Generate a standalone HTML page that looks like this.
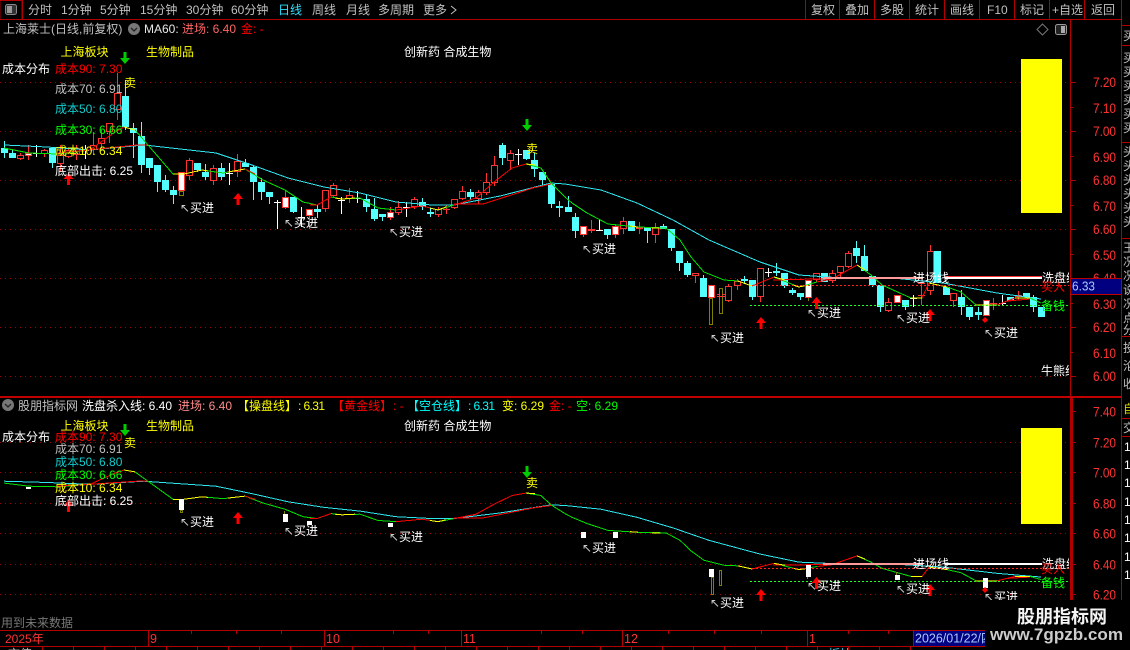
<!DOCTYPE html>
<html><head><meta charset="utf-8"><style>
html,body{margin:0;padding:0;background:#000;width:1130px;height:650px;overflow:hidden}
svg{display:block}
text{font-family:"Liberation Sans","WenQuanYi Zen Hei","Noto Sans CJK SC",sans-serif;font-size:12px;white-space:pre}
.g{fill:#c0c0c0}.w{fill:#fff}.y{fill:#ff0}.r{fill:#f00}.p{fill:#ff6464}.c{fill:#0ff}.gn{fill:#0f0}.dc{fill:#1cc}
.ax{fill:#ff3232;font-size:13.5px}
.ar{font-family:"DejaVu Sans",sans-serif;font-size:12px;fill:#ccc}
.crisp path,.crisp line,.crisp rect{shape-rendering:crispEdges}
</style></head><body>
<svg width="1130" height="650" viewBox="0 0 1130 650" xmlns="http://www.w3.org/2000/svg">
<defs>
<path id="up" d="M-5 6L0 0L5 6H1.5V12H-1.5V6Z" fill="#f00"/>
<path id="dn" d="M-5 6L0 12L5 6H1.5V0H-1.5V6Z" fill="#0c0"/>
<clipPath id="ch"><rect x="0" y="20" width="1069" height="376"/></clipPath>
<clipPath id="cb"><rect x="0" y="398" width="1069" height="232"/></clipPath>
<clipPath id="cr"><rect x="1122" y="20" width="8" height="630"/></clipPath>
</defs>

<!-- chrome lines -->
<g class="crisp" stroke="#b00000" fill="none">
<path d="M0 19.5H1121"/>
<path d="M22.5 0V19M805.5 0V19M839.5 0V19M874.5 0V19M909.5 0V19M944.5 0V19M979.5 0V19M1014.5 0V19M1049.5 0V19M1084.5 0V19M1121.5 0V650"/>
<path d="M1070.5 20V396M1121 25.5H1130M1121 45.5H1130M1121 142.5H1130M1121 238.5H1130M1121 336.5H1130M1121 418.5H1130M1121 436.5H1130"/>
<path d="M0 630.5H1070M0 646.5H1130"/>
<path d="M1070 82.5H1076M1070 107.5H1073M1070 131.5H1076M1070 156.5H1073M1070 180.5H1076M1070 205.5H1073M1070 229.5H1076M1070 254.5H1073M1070 278.5H1076M1070 303.5H1073M1070 327.5H1076M1070 352.5H1073M1070 376.5H1076"/>
<path d="M1071 411.5H1076M1071 426.5H1073M1071 442.5H1076M1071 457.5H1073M1071 472.5H1076M1071 488.5H1073M1071 503.5H1076M1071 518.5H1073M1071 533.5H1076M1071 549.5H1073M1071 564.5H1076M1071 579.5H1073M1071 594.5H1076M1071 610.5H1073"/>
<path d="M148.5 631V646M324.5 631V646M461.5 631V646M622.5 631V646M807.5 631V646M191.5 631V634M236.5 631V634M281.5 631V634M393.5 631V634M428.5 631V634M541.5 631V634M582.5 631V634M668.5 631V634M714.5 631V634M761.5 631V634M848.5 631V634M888.5 631V634M42.5 646V650M73.5 646V650M104.5 646V650M135.5 646V650M166.5 646V650M197.5 646V650M228.5 646V650M259.5 646V650M290.5 646V650M321.5 646V650M352.5 646V650M383.5 646V650M414.5 646V650M445.5 646V650M476.5 646V650M507.5 646V650M538.5 646V650M569.5 646V650M600.5 646V650M631.5 646V650M662.5 646V650M693.5 646V650M724.5 646V650M755.5 646V650M786.5 646V650M817.5 646V650M848.5 646V650M879.5 646V650M910.5 646V650"/>
</g>
<rect x="0" y="396" width="1121" height="2" fill="#c00000" class="crisp" shape-rendering="crispEdges"/>
<rect x="1070" y="398" width="3" height="232" fill="#b00000" shape-rendering="crispEdges"/>
<rect x="0" y="0.5" width="22" height="19" fill="none" stroke="#b00000"/>

<!-- grid dots -->
<g stroke="#a00000" stroke-dasharray="1 4" fill="none" shape-rendering="crispEdges">
<path d="M0 82.5H1069M0 131.5H1069M0 180.5H1069M0 229.5H1069M0 278.5H1069M0 327.5H1069M0 376.5H1069"/>
<path d="M0 442.5H1069M0 472.5H1069M0 503.5H1069M0 533.5H1069M0 564.5H1069M0 594.5H1069"/>
</g>

<!-- yellow blocks -->
<rect x="1021" y="59" width="41" height="154" fill="#ff0"/>
<rect x="1021" y="428" width="41" height="96" fill="#ff0"/>

<!-- TOP CANDLES -->
<g clip-path="url(#ch)" shape-rendering="crispEdges">
<path fill="none" stroke="#54ffff" d="M4.5 141V158M12.5 150V158M52.5 148V168M125.5 80V130M133.5 123V158M141.5 122V173M149.5 158V175M157.5 165V192M165.5 175V192M173.5 186V204M197.5 163V172M205.5 164V180M221.5 163V180M245.5 159V167M253.5 165V200M261.5 178V200M269.5 192V204M293.5 197V213M317.5 205V218M366.5 195V212M374.5 198V221M382.5 214V221M422.5 198V210M430.5 208V217M470.5 189V200M502.5 143V165M526.5 150V160M534.5 153V177M542.5 172V186M551.5 184V208M559.5 201V217M568.5 196V212M575.5 213V238M607.5 229V239M631.5 221V231M647.5 227V243M663.5 224V229M671.5 229V251M679.5 251V271M687.5 261V277M703.5 275V297M744.5 276V284M752.5 280V300M776.5 263V276M784.5 273V288M792.5 288V295M800.5 293V300M824.5 273V282M856.5 241V263M864.5 245V271M872.5 276V287M880.5 285V312M905.5 300V310M937.5 251V283M946.5 287V295M961.5 290V315M969.5 307V320M978.5 307V320M1010.5 297V301M1026.5 293V297M1033.5 295V312M1041.5 307V317"/>
<path fill="none" stroke="#54ffff" stroke-width="7" d="M4.5 148V153M12.5 153V158M52.5 148V163M125.5 96V127M133.5 128V133M141.5 136V165M149.5 158V168M157.5 165V182M165.5 180V190M173.5 190V195M197.5 163V170M205.5 172V177M221.5 168V177M245.5 163V167M253.5 167V182M261.5 182V192M269.5 192V197M293.5 197V212M317.5 209V212M366.5 199V207M374.5 209V219M382.5 214V217M422.5 202V207M430.5 212V214M470.5 192V197M502.5 145V158M526.5 150V159M534.5 160V169M542.5 172V180M551.5 184V204M559.5 206V208M568.5 207V212M575.5 217V231M607.5 229V235M631.5 221V231M647.5 227V231M663.5 226V229M671.5 229V248M679.5 251V263M687.5 263V275M703.5 278V297M744.5 279V281M752.5 280V297M776.5 271V273M784.5 273V286M792.5 290V293M800.5 293V297M824.5 273V282M856.5 248V256M864.5 256V271M872.5 276V285M880.5 285V307M905.5 300V307M937.5 251V283M946.5 287V295M961.5 297V307M969.5 307V317M978.5 312V315M1010.5 297V301M1026.5 293V297M1033.5 297V307M1041.5 307V317"/>
<path fill="none" stroke="#ff3232" d="M20.5 153V160M44.5 149V157M60.5 145V172M68.5 148V158M76.5 145V160M93.5 132V155M101.5 130V150M109.5 123V143M117.5 73V120M189.5 158V180M213.5 165V185M237.5 154V177M325.5 190V212M333.5 183V198M349.5 188V203M398.5 201V215M414.5 197V209M438.5 207V217M454.5 199V209M462.5 186V200M478.5 190V204M486.5 173V195M494.5 156V186M510.5 150V170M591.5 220V233M623.5 217V234M639.5 222V234M655.5 223V243M695.5 273V283M728.5 284V302M737.5 279V290M760.5 268V302M816.5 273V282M832.5 270V283M840.5 266V278M848.5 251V268M888.5 298V312M921.5 283V305M930.5 245V295M953.5 293V307M993.5 298V310M1018.5 291V300M446.5 205V214M28.5 145V160M309.5 209V229M390.5 207V220M583.5 226V237M615.5 224V238"/>
<path fill="#000" stroke="#ff3232" d="M17.5 155.5h6v3h-6zM41.5 150.5h6v3h-6zM57.5 155.5h6v8h-6zM65.5 150.5h6v6h-6zM73.5 148.5h6v6h-6zM90.5 145.5h6v4h-6zM98.5 138.5h6v5h-6zM106.5 123.5h6v8h-6zM114.5 93.5h6v16h-6zM186.5 160.5h6v15h-6zM210.5 168.5h6v12h-6zM234.5 161.5h6v10h-6zM322.5 190.5h6v18h-6zM330.5 185.5h6v10h-6zM346.5 195.5h6v3h-6zM395.5 207.5h6v5h-6zM411.5 199.5h6v7h-6zM435.5 209.5h6v5h-6zM451.5 199.5h6v8h-6zM459.5 191.5h6v7h-6zM475.5 192.5h6v6h-6zM483.5 182.5h6v10h-6zM491.5 165.5h6v17h-6zM507.5 153.5h6v7h-6zM588.5 229.5h6v1h-6zM620.5 221.5h6v7h-6zM636.5 227.5h6v1h-6zM652.5 227.5h6v7h-6zM692.5 273.5h6v2h-6zM725.5 286.5h6v14h-6zM734.5 281.5h6v4h-6zM757.5 268.5h6v28h-6zM813.5 273.5h6v6h-6zM829.5 273.5h6v7h-6zM837.5 266.5h6v6h-6zM845.5 253.5h6v13h-6zM885.5 302.5h6v8h-6zM927.5 251.5h6v39h-6zM950.5 293.5h6v7h-6zM1015.5 295.5h6v1h-6z"/>
<path fill="none" stroke="#ff3232" d="M918 283.5h7M918 295.5h7M990 303.5h7M443 209.5h7"/>
<path fill="#fff" stroke="#ff3232" d="M25.5 153.5h6v2h-6zM178.5 172.5h6v18h-6zM282.5 197.5h6v10h-6zM306.5 209.5h6v6h-6zM387.5 212.5h6v5h-6zM580.5 226.5h6v8h-6zM612.5 226.5h6v8h-6zM708.5 285.5h6v12h-6zM805.5 280.5h6v17h-6zM894.5 295.5h6v7h-6zM983.5 300.5h6v15h-6z"/>
<path fill="none" stroke="#808000" d="M179.5 191.5h4v4h-4zM285.5 190V197M285.5 208V209M709.5 298.5h3v26h-3zM719.5 288.5h3v25h-3zM808.5 298V301"/>
<path fill="none" stroke="#ff3232" d="M717 294.5h3M722 294.5h3M717 296.5h8"/>
<path fill="none" stroke="#fff" d="M36.5 145V157M33 153.5H40M85.5 145V159M82 150.5H89M229.5 163V185M226 173.5H233M277.5 200V229M274 202.5H281M301.5 207V227M298 217.5H305M341.5 197V214M338 200.5H345M357.5 191V203M354 198.5H361M406.5 202V217M403 207.5H410M518.5 149V165M515 154.5H522M599.5 220V231M596 230.5H603M768.5 268V277M765 272.5H772M913.5 295V307M910 298.5H917M1002.5 295V305M999 303.5H1006"/>
</g>

<!-- LINES (top) -->
<g clip-path="url(#ch)">
<g id="L" fill="none" shape-rendering="crispEdges">
<path vector-effect="non-scaling-stroke" stroke="#2ee8f0" stroke-width="1" d="M4 145L47 147L90 150L144 145L216 153L252 165L288 178L324 187L360 193L396 202L432 205L454 205L500 196L551 183L565 184L601 190L637 203L673 220L709 240L760 262L799 275L842 278L893 278L943 283L997 293L1041 299"/>
<path vector-effect="non-scaling-stroke" stroke="#00e000" stroke-width="1" d="M4 148L29 153L58 154L90 150L101 142L115 132L124 127L135 130L148 145L173 174L184 174L202 170L223 173L245 169L263 180L285 190L303 202L317 205L331 197L342 199L360 198L378 208L396 210L422 206L438 210L454 205L476 198L494 182L512 168L526 164L541 168L551 183L565 197L572 203L587 213L608 224L637 227L666 228L680 240L691 257L704 272L724 280L738 281L752 286L774 277L799 287L817 282L832 279L857 265L871 275L882 285L911 298L922 298L929 283L947 287L961 292L976 305L997 305L1015 298L1030 298L1041 303"/>
<path vector-effect="non-scaling-stroke" stroke="#f00" stroke-width="1" d="M58 153L108 148L137 145L148 145M90 150L101 142L115 132L124 127M454 205L476 198L494 182L512 168L526 164M454 204L483 204L505 197L533 188L551 184M245 169L255 174M310 205L317 205L331 197M396 210L422 206L430 208M752 286L774 277M817 282L832 279L857 265M773 280L815 279L875 278M922 298L929 283M997 305L1015 298M1008 301L1030 299"/>
<path vector-effect="non-scaling-stroke" stroke="#ff0" stroke-width="1" d="M124 127L135 130M173 174L184 174L202 170L208 171M228 172L245 169M335 198L342 199L355 198M430 208L438 210L446 207M526 164L535 165M630 226L638 227M652 228L660 228M738 281L752 286M774 277L785 280M793 285L799 287L808 285M857 265L865 270M911 298L922 298M929 283L947 287M976 305L997 305M1015 298L1030 298"/>
</g>
<path stroke="#ff9a9a" stroke-width="2" d="M823 278H923"/>
<path stroke="#fff" stroke-width="2" d="M945 278H1042"/>
<path stroke="#f33" stroke-width="1" d="M945 276.5H1042"/>
<path stroke="#ff2020" stroke-dasharray="2 2" d="M752 285.5H1070" shape-rendering="crispEdges"/>
<path stroke="#2f2" stroke-dasharray="2 2" d="M750 305.5H1070" shape-rendering="crispEdges"/>
</g>

<!-- BOTTOM LINES AND MARKS -->
<g clip-path="url(#cb)">
<use href="#L" transform="translate(0,390.97) scale(1,.6224)"/>
<path stroke="#ff9a9a" stroke-width="2" d="M823 564H923"/>
<path stroke="#fff" stroke-width="2" d="M945 564H1042"/>
<path stroke="#ff2020" stroke-dasharray="2 2" d="M752 568.5H1070" shape-rendering="crispEdges"/>
<path stroke="#2f2" stroke-dasharray="2 2" d="M750 581.5H1070" shape-rendering="crispEdges"/>
<g shape-rendering="crispEdges">
<path fill="#fff" d="M179 499h5v11h-5zM283 514h5v8h-5zM307 521h5v4h-5zM388 523h5v4h-5zM26 487h5v2h-5zM581 532h5v6h-5zM613 532h5v6h-5zM709 569h5v8h-5zM806 565h5v12h-5zM895 575h5v5h-5zM983 578h5v10h-5z"/>
<path fill="none" stroke="#808000" d="M180.5 510.5h2v2h-2zM284.5 511v3M711.5 577.5h2v17h-2zM719.5 570.5h2v15h-2zM807.5 577v2M896.5 572v3"/>
</g>
</g>

<!-- arrows -->
<use href="#dn" x="125" y="52"/><use href="#up" x="68.5" y="173"/><use href="#up" x="238" y="193"/><use href="#dn" x="527" y="119"/>
<use href="#up" x="761" y="317"/><use href="#up" x="816.5" y="297"/><use href="#up" x="930" y="309"/>
<path d="M985 317L988 320L985 323L982 320Z" fill="#f00"/>
<use href="#dn" x="125" y="424"/><use href="#up" x="68.5" y="500"/><use href="#up" x="238" y="512"/><use href="#dn" x="527" y="466"/>
<use href="#up" x="761" y="589"/><use href="#up" x="816.5" y="577"/><use href="#up" x="930" y="584"/>
<path d="M985 587L988 590L985 593L982 590Z" fill="#f00"/>

<!-- toolbar -->
<g>
<rect x="5.5" y="4.5" width="11" height="10" rx="2" fill="#333" stroke="#888"/>
<rect x="7" y="6" width="5" height="7" fill="#999"/>
<text class="g" x="28" y="14">分时</text><text class="g" x="61" y="14">1分钟</text><text class="g" x="100" y="14">5分钟</text><text class="g" x="140" y="14">15分钟</text><text class="g" x="186" y="14">30分钟</text><text class="g" x="231" y="14">60分钟</text>
<text x="278" y="14" fill="#2fe0ff">日线</text><text class="g" x="312" y="14">周线</text><text class="g" x="346" y="14">月线</text><text class="g" x="378" y="14">多周期</text><text class="g" x="423" y="14">更多</text>
<path d="M451 6L456 10L451 14" fill="none" stroke="#c0c0c0"/>
<text class="g" x="811" y="14">复权</text><text class="g" x="845" y="14">叠加</text><text class="g" x="880" y="14">多股</text><text class="g" x="915" y="14">统计</text><text class="g" x="950" y="14">画线</text><text class="g" x="987" y="14">F10</text><text class="g" x="1020" y="14">标记</text><text class="g" x="1052" y="14">+自选</text><text class="g" x="1091" y="14">返回</text>
</g>

<!-- header top -->
<text class="g" x="3" y="33">上海莱士(日线,前复权)</text>
<circle cx="134" cy="29" r="6" fill="#777"/><path d="M131 28L134 31L137 28" fill="none" stroke="#222" stroke-width="1.3"/>
<text x="144" y="33" fill="#e8e8e8">MA60:</text>
<text class="p" x="182" y="33">进场: 6.40</text>
<text class="r" x="241" y="33">金: -</text>
<path d="M1042.5 24L1048 29.5L1042.5 35L1037 29.5Z" fill="none" stroke="#777"/>
<rect x="1055.5" y="24.5" width="11" height="10" rx="2" fill="#222" stroke="#999"/><rect x="1061" y="26" width="4" height="7" fill="#aaa"/>

<!-- top pane labels -->
<text class="y" x="60.5" y="56">上海板块</text><text class="y" x="146" y="56">生物制品</text><text class="w" x="404" y="56">创新药 合成生物</text>
<text class="w" x="2" y="73">成本分布</text>
<text class="r" x="55" y="73">成本90: 7.30</text>
<text class="g" x="55" y="93">成本70: 6.91</text>
<text class="dc" x="55" y="113">成本50: 6.80</text>
<text class="gn" x="55" y="134">成本30: 6.66</text>
<text class="y" x="55" y="155">成本10: 6.34</text>
<text class="w" x="55" y="175">底部出击: 6.25</text>
<text class="y" x="124" y="87">卖</text><text class="y" x="526" y="153">卖</text>
<g class="w">
<text class="ar" x="180" y="212">↖</text><text x="190" y="212">买进</text>
<text class="ar" x="284" y="227">↖</text><text x="294" y="227">买进</text>
<text class="ar" x="389" y="236">↖</text><text x="399" y="236">买进</text>
<text class="ar" x="582" y="253">↖</text><text x="592" y="253">买进</text>
<text class="ar" x="710" y="342">↖</text><text x="720" y="342">买进</text>
<text class="ar" x="807" y="317">↖</text><text x="817" y="317">买进</text>
<text class="ar" x="896" y="322">↖</text><text x="906" y="322">买进</text>
<text class="ar" x="984" y="337">↖</text><text x="994" y="337">买进</text>
</g>
<g clip-path="url(#ch)">
<text class="w" x="913" y="282">进场线</text><text class="w" x="1042" y="282">洗盘线</text><text class="r" x="1041" y="291">买入</text><text class="gn" x="1041" y="310">备钱</text><text class="w" x="1041" y="375">牛熊线</text>
</g>

<!-- top axis -->
<g class="ax">
<text class="ax" x="1093" y="87" textLength="23" lengthAdjust="spacingAndGlyphs">7.20</text>
<text class="ax" x="1093" y="113" textLength="23" lengthAdjust="spacingAndGlyphs">7.10</text>
<text class="ax" x="1093" y="136" textLength="23" lengthAdjust="spacingAndGlyphs">7.00</text>
<text class="ax" x="1093" y="162" textLength="23" lengthAdjust="spacingAndGlyphs">6.90</text>
<text class="ax" x="1093" y="185" textLength="23" lengthAdjust="spacingAndGlyphs">6.80</text>
<text class="ax" x="1093" y="211" textLength="23" lengthAdjust="spacingAndGlyphs">6.70</text>
<text class="ax" x="1093" y="234" textLength="23" lengthAdjust="spacingAndGlyphs">6.60</text>
<text class="ax" x="1093" y="260" textLength="23" lengthAdjust="spacingAndGlyphs">6.50</text>
<text class="ax" x="1093" y="283" textLength="23" lengthAdjust="spacingAndGlyphs">6.40</text>
<text class="ax" x="1093" y="309" textLength="23" lengthAdjust="spacingAndGlyphs">6.30</text>
<text class="ax" x="1093" y="332" textLength="23" lengthAdjust="spacingAndGlyphs">6.20</text>
<text class="ax" x="1093" y="358" textLength="23" lengthAdjust="spacingAndGlyphs">6.10</text>
<text class="ax" x="1093" y="381" textLength="23" lengthAdjust="spacingAndGlyphs">6.00</text>
</g>
<rect x="1071" y="278" width="50" height="16" fill="#000080"/>
<path d="M1070 278.5H1121M1070 294.5H1121" stroke="#c00000" shape-rendering="crispEdges"/>
<text x="1072" y="290.5" style="font-size:13px" fill="#a8c8ff" textLength="23" lengthAdjust="spacingAndGlyphs">6.33</text>

<!-- bottom header -->
<circle cx="8" cy="405" r="6" fill="#777"/><path d="M5 404L8 407L11 404" fill="none" stroke="#222" stroke-width="1.3"/>
<text class="g" x="18" y="410">股朋指标网</text>
<text class="w" x="82" y="410">洗盘杀入线: 6.40</text>
<text x="178" y="410" fill="#ff8a8a">进场: 6.40</text>
<text class="y" x="237" y="410">【操盘线】</text><text class="y" x="298" y="410" textLength="27" lengthAdjust="spacing">: 6.31</text>
<text class="r" x="332" y="410">【黄金线】</text><text class="r" x="393" y="410">: -</text>
<text class="c" x="407" y="410">【空仓线】</text><text class="c" x="468" y="410" textLength="27" lengthAdjust="spacing">: 6.31</text>
<text class="y" x="502" y="410">变: 6.29</text>
<text class="r" x="549" y="410">金: -</text>
<text class="gn" x="576" y="410">空: 6.29</text>

<!-- bottom pane labels -->
<text class="y" x="60.5" y="430">上海板块</text><text class="y" x="146" y="430">生物制品</text><text class="w" x="404" y="430">创新药 合成生物</text>
<text class="w" x="2" y="441">成本分布</text>
<text class="r" x="55" y="441">成本90: 7.30</text>
<text class="g" x="55" y="453">成本70: 6.91</text>
<text class="dc" x="55" y="466">成本50: 6.80</text>
<text class="gn" x="55" y="479">成本30: 6.66</text>
<text class="y" x="55" y="492">成本10: 6.34</text>
<text class="w" x="55" y="505">底部出击: 6.25</text>
<text class="y" x="124" y="447">卖</text><text class="y" x="526" y="487">卖</text>
<g class="w">
<text class="ar" x="180" y="526">↖</text><text x="190" y="526">买进</text>
<text class="ar" x="284" y="535">↖</text><text x="294" y="535">买进</text>
<text class="ar" x="389" y="541">↖</text><text x="399" y="541">买进</text>
<text class="ar" x="582" y="552">↖</text><text x="592" y="552">买进</text>
<text class="ar" x="710" y="607">↖</text><text x="720" y="607">买进</text>
<text class="ar" x="807" y="590">↖</text><text x="817" y="590">买进</text>
<text class="ar" x="896" y="593">↖</text><text x="906" y="593">买进</text>
<text class="ar" x="984" y="601">↖</text><text x="994" y="601">买进</text>
</g>
<g clip-path="url(#cb)">
<text class="w" x="913" y="568">进场线</text><text class="w" x="1042" y="568">洗盘线</text><text class="r" x="1041" y="573">买入</text><text class="gn" x="1041" y="587">备钱</text>
</g>
<text x="1" y="627" fill="#777">用到未来数据</text>

<!-- bottom axis -->
<text class="ax" x="1093" y="416.5" textLength="23" lengthAdjust="spacingAndGlyphs">7.40</text>
<text class="ax" x="1093" y="447.5" textLength="23" lengthAdjust="spacingAndGlyphs">7.20</text>
<text class="ax" x="1093" y="477.5" textLength="23" lengthAdjust="spacingAndGlyphs">7.00</text>
<text class="ax" x="1093" y="508.5" textLength="23" lengthAdjust="spacingAndGlyphs">6.80</text>
<text class="ax" x="1093" y="538.5" textLength="23" lengthAdjust="spacingAndGlyphs">6.60</text>
<text class="ax" x="1093" y="569.5" textLength="23" lengthAdjust="spacingAndGlyphs">6.40</text>
<text class="ax" x="1093" y="599.5" textLength="23" lengthAdjust="spacingAndGlyphs">6.20</text>

<!-- time axis -->
<text x="5" y="643" style="fill:#ff3232;font-size:12px">2025年</text>
<text x="150" y="643" style="fill:#ff3232;font-size:12.5px">9</text>
<text x="326" y="643" style="fill:#ff3232;font-size:12.5px">10</text>
<text x="463" y="643" style="fill:#ff3232;font-size:12.5px">11</text>
<text x="624" y="643" style="fill:#ff3232;font-size:12.5px">12</text>
<text x="809" y="643" style="fill:#ff3232;font-size:12.5px">1</text>
<rect x="914" y="631" width="71" height="15" fill="#000080"/>
<path d="M913.5 631V646" stroke="#b00000"/>
<text x="915" y="642.5" fill="#a8c8ff" style="font-size:12.5px">2026/01/22/四</text>

<!-- right column clipped text -->
<g clip-path="url(#cr)">
<text class="g" x="1123" y="40">买</text>
<text class="g" x="1123"><tspan x="1123" y="62">买</tspan><tspan x="1123" y="76">买</tspan><tspan x="1123" y="90">买</tspan><tspan x="1123" y="104">买</tspan><tspan x="1123" y="118">买</tspan><tspan x="1123" y="132">买</tspan><tspan x="1123" y="156">头</tspan><tspan x="1123" y="170">头</tspan><tspan x="1123" y="184">头</tspan><tspan x="1123" y="198">头</tspan><tspan x="1123" y="212">头</tspan><tspan x="1123" y="226">头</tspan></text>
<text class="g" x="1123"><tspan x="1123" y="252">王</tspan><tspan x="1123" y="266">况</tspan><tspan x="1123" y="280">况</tspan><tspan x="1123" y="294">说</tspan><tspan x="1123" y="308">况</tspan><tspan x="1123" y="322">点</tspan><tspan x="1123" y="334">分</tspan><tspan x="1123" y="352">投</tspan><tspan x="1123" y="370">沦</tspan><tspan x="1123" y="388">收</tspan></text>
<text x="1123" y="413" fill="#d0d000">自</text>
<text class="g" x="1123" y="432">交</text>
<text class="w" x="1124"><tspan x="1124" y="451">1</tspan><tspan x="1124" y="469">1</tspan><tspan x="1124" y="487">1</tspan><tspan x="1124" y="506">1</tspan><tspan x="1124" y="524">1</tspan><tspan x="1124" y="542">1</tspan><tspan x="1124" y="561">1</tspan><tspan x="1124" y="579">1</tspan></text>
</g>

<!-- bottom cut text -->
<text class="g" x="8" y="658">市值</text>
<text x="828" y="658" fill="#3ce">板块</text>

<!-- watermark -->
<rect x="985" y="600" width="145" height="50" fill="#000"/>
<text x="1017" y="623" fill="#f4f4f4" style="font-size:18px;font-weight:bold;font-family:'Liberation Sans','Noto Sans CJK SC',sans-serif">股朋指标网</text>
<text x="990" y="640" fill="#ccc" style="font-size:17px;font-weight:bold" textLength="133" lengthAdjust="spacingAndGlyphs">www.7gpzb.com</text>
</svg>
</body></html>
